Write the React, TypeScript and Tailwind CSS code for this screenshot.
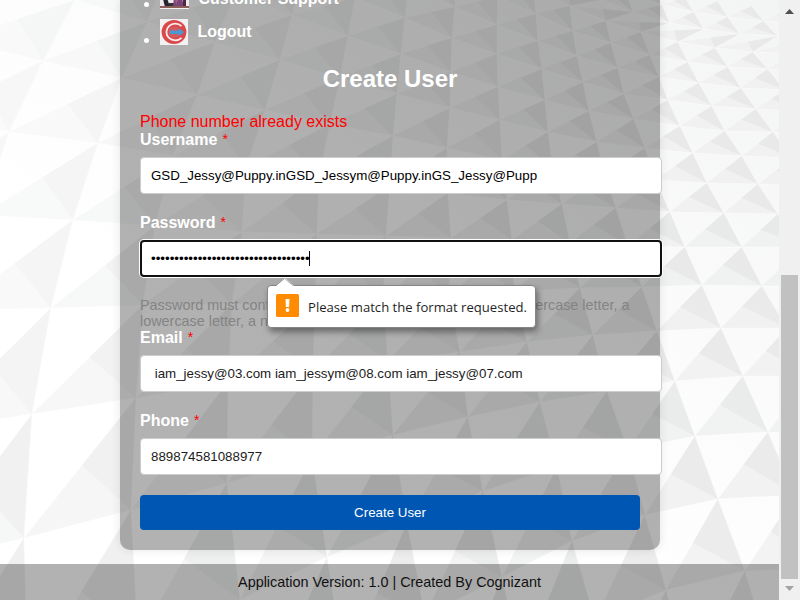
import React from "react";

type Point = [number, number];

// Vertices of the faceted wall, one entry per row; `start` is the column of the first vertex.
const rows: { start: number; points: Point[] }[] = [
  { start: 12, points: [[652, -12], [685, -3], [718, 1], [752, 6], [788, 9]] },
  { start: 11, points: [[627, -6], [662, 5], [694, 12], [728, 17], [764, 21], [801, 24]] },
  { start: 9, points: [[568, -17], [602, 0], [633, 12], [670, 23], [704, 29], [740, 34], [778, 36], [815, 38]] },
  { start: 8, points: [[500, -32], [534, -12], [570, 6], [606, 21], [641, 32], [678, 42], [715, 48], [753, 52], [792, 54]] },
  { start: 6, points: [[411, -50], [457, -24], [498, -3], [536, 14], [573, 31], [611, 43], [650, 55], [688, 62], [728, 67], [768, 69], [808, 71]] },
  { start: 5, points: [[361, -36], [409, -15], [455, 7], [497, 25], [538, 41], [577, 56], [618, 68], [659, 77], [699, 83], [741, 88], [785, 90]] },
  { start: 4, points: [[305, -26], [355, -2], [405, 18], [452, 38], [497, 54], [542, 69], [583, 82], [624, 94], [668, 100], [712, 106], [756, 109], [801, 111]] },
  { start: 2, points: [[168, -28], [235, -6], [292, 15], [348, 36], [401, 54], [451, 72], [498, 87], [545, 100], [589, 111], [634, 119], [680, 126], [725, 131], [773, 132], [820, 133]] },
  { start: 1, points: [[75, 0], [147, 22], [215, 42], [280, 60], [340, 78], [397, 94], [450, 108], [500, 120], [548, 132], [597, 142], [645, 148], [693, 153], [742, 156], [793, 158]] },
  { start: 0, points: [[-45, 40], [43, 61], [122, 78], [197, 95], [265, 110], [330, 124], [393, 136], [447, 148], [502, 160], [553, 168], [605, 175], [656, 180], [707, 183], [758, 184], [812, 185]] },
  { start: 0, points: [[-75, 118], [9, 132], [98, 143], [173, 156], [246, 168], [319, 177], [390, 186], [448, 193], [507, 200], [562, 204], [616, 208], [670, 212], [724, 213], [778, 214], [833, 215]] },
  { start: 0, points: [[-110, 212], [-18, 215], [73, 220], [155, 226], [242, 232], [317, 234], [386, 236], [451, 238], [512, 240], [570, 243], [628, 246], [685, 247], [742, 247], [803, 247]] },
  { start: 1, points: [[-48, 310], [51, 308], [143, 305], [232, 304], [315, 303], [383, 300], [449, 296], [514, 291], [580, 288], [642, 287], [702, 285], [762, 286], [825, 286]] },
  { start: 1, points: [[-72, 430], [32, 414], [136, 398], [228, 382], [313, 371], [388, 361], [460, 352], [527, 342], [593, 335], [657, 331], [721, 328], [787, 328], [850, 329]] },
  { start: 1, points: [[-82, 565], [24, 538], [131, 510], [227, 483], [312, 457], [393, 435], [468, 417], [540, 402], [607, 391], [675, 381], [743, 376], [812, 376]] },
  { start: 1, points: [[-85, 710], [28, 680], [138, 640], [240, 600], [327, 557], [407, 523], [483, 491], [557, 467], [628, 450], [695, 436], [768, 432], [839, 432]] },
  { start: 3, points: [[148, 760], [255, 720], [345, 670], [425, 616], [502, 577], [572, 541], [645, 515], [718, 499], [795, 495], [870, 500]] },
  { start: 6, points: [[445, 720], [522, 665], [595, 620], [666, 590], [745, 571], [822, 569]] },
  { start: 8, points: [[615, 705], [690, 680], [770, 655], [855, 650]] },
];

const clamp = (n: number) => Math.max(0, Math.min(1, n));
const grey = (n: number) => `rgb(${Math.round(n)},${Math.round(n + 0.6)},${Math.round(n + 0.4)})`;
const poly = (...pts: Point[]) => pts.map((p) => p.join(",")).join(" ");

function FacetedWall() {
  const facets: React.ReactNode[] = [];
  for (let r = 0; r < rows.length - 1; r++) {
    const at = (row: number, col: number) => rows[row].points[col - rows[row].start];
    rows[r].points.forEach((apex, i) => {
      const col = rows[r].start + i;
      const left = at(r + 1, col - 1);
      const right = at(r + 1, col);
      if (!left || !right) return;
      const mid: Point = [left[0] * 0.48 + apex[0] * 0.52, left[1] * 0.48 + apex[1] * 0.52];
      const tx = clamp(apex[0] / 620);
      const ty = clamp((apex[1] - 200) / 250);
      const dark = 247 - tx * 15 - (1 - tx) * ty * 7 + tx * ty * 3;
      const light = 250 - tx * 10 - (1 - tx) * ty * 4 + tx * ty * 2;
      facets.push(
        <g key={`${r}-${col}`}>
          <polygon points={poly(apex, left, right)} fill={grey(light)} />
          <polygon points={poly(apex, mid, right)} fill={grey(dark)} />
          <path d={`M${apex.join(" ")}L${right.join(" ")}L${left.join(" ")}`} fill="none" stroke="#fff" strokeOpacity="0.4" strokeWidth="1.2" />
        </g>
      );
    });
  }
  return (
    <svg className="absolute inset-0 h-[600px] w-[779px]" viewBox="0 0 779 600" aria-hidden="true">
      <defs>
        <linearGradient id="wall" x1="0.35" y1="0.7" x2="1" y2="0">
          <stop offset="0" stopColor="#ffffff" />
          <stop offset="0.4" stopColor="#fcfcfc" />
          <stop offset="1" stopColor="#f3f4f4" />
        </linearGradient>
      </defs>
      <rect width="779" height="600" fill="url(#wall)" />
      {facets}
    </svg>
  );
}

function SupportPicture() {
  return (
    <svg className="block h-[28px] w-[29px]" viewBox="0 0 29 28">
      <rect width="29" height="28" fill="#eee9ec" />
      <path d="M3 18l4-1 3 9H5z" fill="#25252f" />
      <path d="M9 22h6v4H9z" fill="#34303a" />
      <path d="M14 16l8 1 2 9H13z" fill="#794575" />
      <path d="M23 17h3v8h-3z" fill="#4b2945" />
      <path d="M15 18l3 1-2 5z" fill="#a45a8c" />
      <path d="M0 25h29v2H0z" fill="#8b5e59" />
      <path d="M0 27h29v1H0z" fill="#f5efee" />
    </svg>
  );
}

function LogoutPicture() {
  return (
    <svg className="block h-[26px] w-[28px]" viewBox="0 0 28 26">
      <rect width="28" height="26" fill="#f4f1f2" />
      <ellipse cx="14" cy="13" rx="12.4" ry="12" fill="#d9494c" />
      <path d="M21.5 7.2A8.8 8.3 0 1 0 21.5 18.8" fill="none" stroke="#fbecee" strokeWidth="1.8" />
      <ellipse cx="14.5" cy="13" rx="6" ry="5.8" fill="#d45a60" />
      <path d="M9.8 11.4h9V9.2l5.4 4-5.4 4v-2.3h-9z" fill="#4a98d3" />
    </svg>
  );
}

function FieldLabel({ children }: { children: string }) {
  return (
    <label className="flex h-[18px] text-[16px] leading-[18px] font-bold text-white">
      {children}
      <span className="ml-[5px] text-[14px] leading-[16px] font-normal text-[#ff0000]">*</span>
    </label>
  );
}

const inputClass =
  "mt-2 block h-[37px] w-[522px] rounded-[4px] border border-[#ccc] bg-white px-[10px] text-[13.333px] outline-none";

export default function App() {
  return (
    <div className="relative flex h-[600px] w-[800px] overflow-hidden bg-white font-['Liberation_Sans',Arial,sans-serif]">
      <FacetedWall />
      <div className="relative flex w-[779px] flex-col">
        <main className="mx-[120px] h-[550px] w-[540px] rounded-b-[10px] bg-black/30 px-5 shadow-[0_0_10px_rgba(0,0,0,0.1)]">
          <ul className="text-[16px] leading-[18px] font-bold text-white">
            <li className="-mt-[19px] flex h-[38px]">
              <span className="mt-[21px] ml-[4px] h-[5px] w-[5px] rounded-full bg-white" />
              <span className="ml-[11px]"><SupportPicture /></span>
              <span className="mt-[9px] ml-[9.5px]">Customer Support</span>
            </li>
            <li className="flex h-[37px]">
              <span className="mt-[19px] ml-[4px] h-[5px] w-[5px] rounded-full bg-white" />
              <span className="ml-[11px]"><LogoutPicture /></span>
              <span className="mt-[4px] ml-[9.5px]">Logout</span>
            </li>
          </ul>
          <h2 className="mt-[9px] h-[28px] text-center text-[24px] leading-[28px] font-bold text-white">Create User</h2>
          <p className="mt-[20px] h-[18px] text-[16px] leading-[18px] text-[#ff0000]">Phone number already exists</p>
          <form>
            <FieldLabel>Username</FieldLabel>
            <input className={`${inputClass} text-black`} readOnly value="GSD_Jessy@Puppy.inGSD_Jessym@Puppy.inGS_Jessy@Pupp" />
            <div className="h-[20px]" />
            <FieldLabel>Password</FieldLabel>
            <div className="relative">
              <input
                type="password"
                className="mt-2 block h-[37px] w-[522px] rounded-[4px] border-2 border-[#101010] bg-white px-[9px] text-[13.333px] text-black shadow-[0_0_0_1px_white] outline-none"
                readOnly
                value="Jessy@Puppy03Jessym@Puppy08Jessy@1"
              />
              <span className="absolute top-[11px] left-[169px] h-[15px] w-px bg-black" />
              <div className="absolute top-[45px] left-[127px] z-10 flex h-[43px] w-[269px] items-center rounded-[4px] border border-[#858585] bg-white pl-2 shadow-[2px_4px_6px_rgba(0,0,0,0.4)]">
                <svg className="absolute -top-[8px] left-[8px] h-[9px] w-[18px]" viewBox="0 0 18 9">
                  <path d="M0 8L9 0l9 8v1H0z" fill="#fff" />
                  <path d="M0 7.5L8.5.5l8.5 7" fill="none" stroke="#909090" strokeWidth="0.7" />
                </svg>
                <svg className="-mt-[2px] h-[23px] w-[23px]" viewBox="0 0 23 23">
                  <rect width="23" height="23" rx="1.5" fill="#ff8c00" />
                  <path d="M9.5 5h4l-.4 8H9.9z" fill="#fff" />
                  <circle cx="11.5" cy="16" r="1.9" fill="#fff" />
                </svg>
                <span className="ml-[9px] text-[13.1px] leading-[18px] whitespace-nowrap text-[#1f1f1f] font-['Open_Sans','Noto_Sans',sans-serif]">
                  Please match the format requested.
                </span>
              </div>
            </div>
            <p className="mt-[20px] h-[32px] text-[14.4px] leading-[16px] whitespace-nowrap text-[#848484]">
              Password must contain at least 8 characters, including an uppercase letter, a
              <br />
              lowercase letter, a number
            </p>
            <FieldLabel>Email</FieldLabel>
            <input className={`${inputClass} text-[#1c1c1c]`} readOnly value=" iam_jessy@03.com iam_jessym@08.com iam_jessy@07.com" />
            <div className="h-[20px]" />
            <FieldLabel>Phone</FieldLabel>
            <input className={`${inputClass} text-[#1c1c1c]`} readOnly value="889874581088977" />
            <button type="button" className="mt-[20px] block h-[35px] w-[500px] rounded-[4px] bg-[#0056b3] text-center text-[13.333px] text-white">
              Create User
            </button>
          </form>
        </main>
        <footer className="mt-[14px] flex h-9 items-center justify-center bg-black/30 pt-px text-[14.4px] text-[#111]">
          Application Version: 1.0 | Created By Cognizant
        </footer>
      </div>
      <aside className="relative flex w-[21px] flex-col items-center bg-[#f0f0f0]">
        <svg className="mt-[9px] h-[5px] w-[9px]" viewBox="0 0 9 5"><path d="M4.5 0L9 5H0z" fill="#505050" /></svg>
        <div className="mt-[261px] h-[304px] w-[17px] bg-[#c1c1c1]" />
        <svg className="mt-[7px] h-[5px] w-[9px]" viewBox="0 0 9 5"><path d="M0 0h9L4.5 5z" fill="#a3a3a3" /></svg>
      </aside>
    </div>
  );
}
